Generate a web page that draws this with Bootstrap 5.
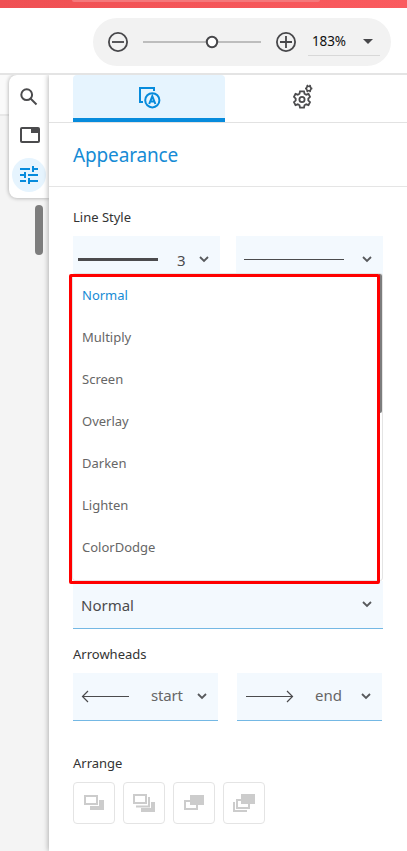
<!DOCTYPE html>
<html lang="en">
<head>
<meta charset="utf-8">
<meta name="viewport" content="width=device-width, initial-scale=1">
<title>Appearance panel</title>
<link href="https://cdn.jsdelivr.net/npm/bootstrap@5.3.0/dist/css/bootstrap.min.css" rel="stylesheet">
<style>
html,body{height:851px;overflow:hidden}
body{font-family:"Noto Sans","Open Sans",sans-serif;color:#333;background:#fff}
svg{display:block;flex:none}
.brandbar{height:8px;background:linear-gradient(90deg,#ef5053,#fa5b5f)}
.brandbar span{display:block;width:248px;height:2px;margin-left:72px;background:#f5787b;border-radius:0 0 8px 8px}
.topbar{height:67px;border-bottom:2px solid #e4e4e4;padding:10px 16px 0 93px}
.zoombox{height:48px;background:#f2f2f2;border-radius:24px;padding-left:14px}
.slider{width:118px;height:14px;margin:0 14px 0 14px}
.zoomval{width:72px;height:27px;border-bottom:1px solid #d8d8d8;margin-left:11px;font-size:13.5px;letter-spacing:-.1px;color:#111;padding:0 7px 0 4px}
.work{height:776px}
.canvas-side{width:49px;background:linear-gradient(#fafafa 0 39px,#e8e8e8 39px 41px,#f4f4f4 41px);padding-left:9px}
.rail{height:123px;border-radius:8px 0 0 8px;background:#fff;box-shadow:0 0 4px #0005;clip-path:inset(0 0 -6px -6px)}
.rail-cell{height:39px;padding:4px 0 0 11px}
.rail-active{width:34px;height:34px;border-radius:50%;background:#e6f4fe;margin:5px 0 0 3px}
.thumb{width:8px;height:50px;border-radius:4px;background:#7d7d7d;margin:7px 6px 0 26px}
.panel{box-shadow:-1px 0 5px #0004;clip-path:inset(0 0 0 -8px)}
.tabs{height:48px;border-bottom:1px solid #e2e2e2;padding-left:24px}
.tab-item{width:152px;height:47px}
.tab-on{background:#e6f4fe;border-bottom:4px solid #078bdc;border-radius:4px 4px 0 0;padding:2px 0 0 1px}
.tab-gear{padding:0 0 3px 4px}
.heading{height:64px;border-bottom:1px solid #e5e5e5;padding-left:24px;font-size:19px;letter-spacing:-.15px;color:#168bd5;line-height:64px}
.settings{padding:0 24px}
.caption{font-size:13px;line-height:18px;color:#333}
.field{height:48px;background:#f3f9fe;border-bottom:1px solid #74b8e4;color:#666;font-size:15px}
.half{width:147px}.arrow{width:145px}
.arrow span{padding-bottom:3px}
.dark-label{color:#4b4b4d;padding-top:2px}
.bar{background:#4b4b4d}
.blend{height:345px}
.menu-box{top:-11px;left:-1px;width:311px;height:308px;background:#fff;border:1px solid #e4e4e4;border-radius:3px;z-index:2}
.menu-box ul{margin:0;padding:0 0 0 9px;list-style:none;font-size:13px;color:#666}
.menu-box li{height:42px;line-height:42px}
.menu-box li.on{color:#168bd5}
.scroll{right:0;top:0;width:3px;height:139px;background:#7d7d7d;border-radius:0 2px 2px 0}
.outline{left:-4px;top:-10px;width:311px;height:310px;border:3px solid #f00;border-radius:2px;z-index:3}
.tool{width:42px;height:42px;border:1px solid #e4e4e4;border-radius:4px;background:#fff;padding:0}
</style>
<script src="https://cdn.jsdelivr.net/npm/bootstrap@5.3.0/dist/js/bootstrap.bundle.min.js"></script>
</head>
<body>
<svg width="0" height="0" class="position-absolute"><defs>
<symbol id="chev" viewBox="0 0 10 7"><path d="M1 1l4 4 4-4" fill="none" stroke="#57595c" stroke-width="1.8"/></symbol>
</defs></svg>
<div class="brandbar"><span></span></div>
<header class="topbar">
  <div class="zoombox d-flex align-items-center">
    <svg width="22" height="22" fill="none" stroke="#47474a" stroke-width="1.8"><circle cx="11" cy="11" r="9.1"/><path d="M5 11h12"/></svg>
    <svg class="slider" viewBox="0 0 118 14"><path d="M0 7h118" stroke="#bdbdbd" stroke-width="2"/><circle cx="69" cy="7" r="5.2" fill="#fff" stroke="#47474a" stroke-width="2"/></svg>
    <svg width="22" height="22" fill="none" stroke="#47474a" stroke-width="1.8"><circle cx="11" cy="11" r="9.1"/><path d="M5 11h12M11 5v12"/></svg>
    <div class="zoomval d-flex align-items-center justify-content-between"><span>183%</span><svg width="10" height="5"><path d="M0 0h10L5 5z" fill="#47474a"/></svg></div>
  </div>
</header>
<main class="work d-flex">
  <aside class="canvas-side flex-shrink-0">
    <div class="rail">
      <div class="rail-cell d-flex align-items-center"><svg width="18" height="18" fill="none" stroke="#4b4b4d" stroke-width="2"><circle cx="6.7" cy="6.7" r="5.4"/><path d="M10.500 10.500l6 6"/></svg></div>
      <div class="rail-cell d-flex align-items-center"><svg width="20" height="17"><rect x="0" y="0" width="20" height="16" rx="2" fill="#4b4b4d"/><path d="M2 2h9v4h7v8H2z" fill="#fff"/></svg></div>
      <div class="d-flex"><div class="rail-active d-flex align-items-center justify-content-center"><svg width="18" height="18" stroke="#078bdc" stroke-width="2" fill="none"><path d="M0 3h10M12 3h6M13 0v6M0 9h4M8 9h10M5 6v6M0 15h6M9 15h9M9 12v6"/></svg></div></div>
    </div>
    <div class="thumb"></div>
  </aside>
  <section class="panel bg-white flex-grow-1">
    <nav class="tabs d-flex">
      <div class="tab-item tab-on d-flex align-items-center justify-content-center"><svg width="22" height="22" fill="none" stroke="#078bdc" stroke-width="2"><path d="M4 15H1V1h14v3"/><circle cx="13.3" cy="13.3" r="7.1"/><path d="M10.200 17l3.100-7.700 3.100 7.700M11.400 14.500h3.800"/></svg></div>
      <div class="tab-item tab-gear d-flex align-items-center justify-content-center"><svg width="22" height="26" fill="none" stroke="#4b4b4d" stroke-width="1.8"><path d="M8 7.300h4l.5 2.400 1.700 1 2.300-.8 1.500 3-1.700 1.700v1.800l1.700 1.700-1.500 3-2.300-.8-1.700 1L12 23.700H8l-.5-2.400-1.700-1-2.300.8-1.500-3 1.700-1.700v-1.800L2 12.900l1.500-3 2.300.8 1.700-1z"/><circle cx="10" cy="15.500" r="2.600"/><circle cx="16.700" cy="4.500" r="2.300" stroke-width="1.600"/><path d="M15 .9l.7 1.500M18.400.9l-.7 1.500M15 8.100l.7-1.500M18.400 8.100l-.7-1.500M13 4.500h1.400M19 4.500h1.400" stroke-width="1.500"/></svg></div>
    </nav>
    <div class="heading">Appearance</div>
    <div class="settings">
      <div class="caption" style="padding-top:21px">Line Style</div>
      <div class="d-flex justify-content-between" style="margin:10px 0 0">
        <div class="field half d-flex align-items-center ps-1"><div class="bar" style="width:80px;height:3px;margin-left:1px"></div><span class="dark-label" style="margin-left:19px">3</span><svg width="10" height="7" style="margin-left:13px"><use href="#chev"/></svg></div>
        <div class="field half d-flex align-items-center ps-2"><div class="bar" style="width:100px;height:1px"></div><svg width="10" height="7" style="margin-left:18px"><use href="#chev"/></svg></div>
      </div>
      <div class="blend position-relative d-flex flex-column justify-content-end">
        <div class="field d-flex align-items-center justify-content-between ps-2" style="padding-right:11px"><span class="dark-label">Normal</span><svg width="10" height="7"><use href="#chev"/></svg></div>
        <div class="menu-box position-absolute"><ul><li class="on">Normal</li><li>Multiply</li><li>Screen</li><li>Overlay</li><li>Darken</li><li>Lighten</li><li>ColorDodge</li></ul><div class="scroll position-absolute"></div></div>
        <div class="outline position-absolute"></div>
      </div>
      <div class="caption" style="padding-top:16px">Arrowheads</div>
      <div class="d-flex justify-content-between" style="padding:10px 1px 0 0">
        <div class="field arrow d-flex align-items-center"><svg width="48" height="13" style="margin-left:8px" fill="none" stroke="#4b4b4d" stroke-width="1.200"><path d="M2 6.500h46M7 1L1.500 6.500 7 12"/></svg><span style="margin-left:22px;letter-spacing:-.2px">start</span><svg width="10" height="7" style="margin-left:14px"><use href="#chev"/></svg></div>
        <div class="field arrow d-flex align-items-center"><svg width="48" height="13" style="margin-left:9px" fill="none" stroke="#4b4b4d" stroke-width="1.200"><path d="M0 6.500h46M41 1l5.500 5.500L41 12"/></svg><span style="margin-left:21px">end</span><svg width="10" height="7" style="margin-left:19px"><use href="#chev"/></svg></div>
      </div>
      <div class="caption" style="padding-top:33px">Arrange</div>
      <div class="d-flex gap-2" style="padding-top:10px">
        <div class="tool"><svg width="40" height="40"><path d="M16 23V27h14V17h-5v6z" fill="#ccc"/><path d="M11 13h12v8H11z" fill="none" stroke="#ccc" stroke-width="2"/></svg></div>
        <div class="tool"><svg width="40" height="40"><path d="M17 25v4h14V19h-4v6z" fill="#ccc"/><path d="M10 12h12v8H10zM12 23.500h13V14" fill="none" stroke="#ccc" stroke-width="2"/></svg></div>
        <div class="tool"><svg width="40" height="40"><path d="M16 12h14v10H16z" fill="#ccc"/><path d="M16 18h-5v8h12v-4" fill="none" stroke="#ccc" stroke-width="2"/></svg></div>
        <div class="tool"><svg width="40" height="40"><path d="M17 11h14v10H17z" fill="#ccc"/><path d="M17 17h-4v8h12v-4M10 19v9h13" fill="none" stroke="#ccc" stroke-width="2"/></svg></div>
      </div>
    </div>
  </section>
</main>
</body>
</html>
